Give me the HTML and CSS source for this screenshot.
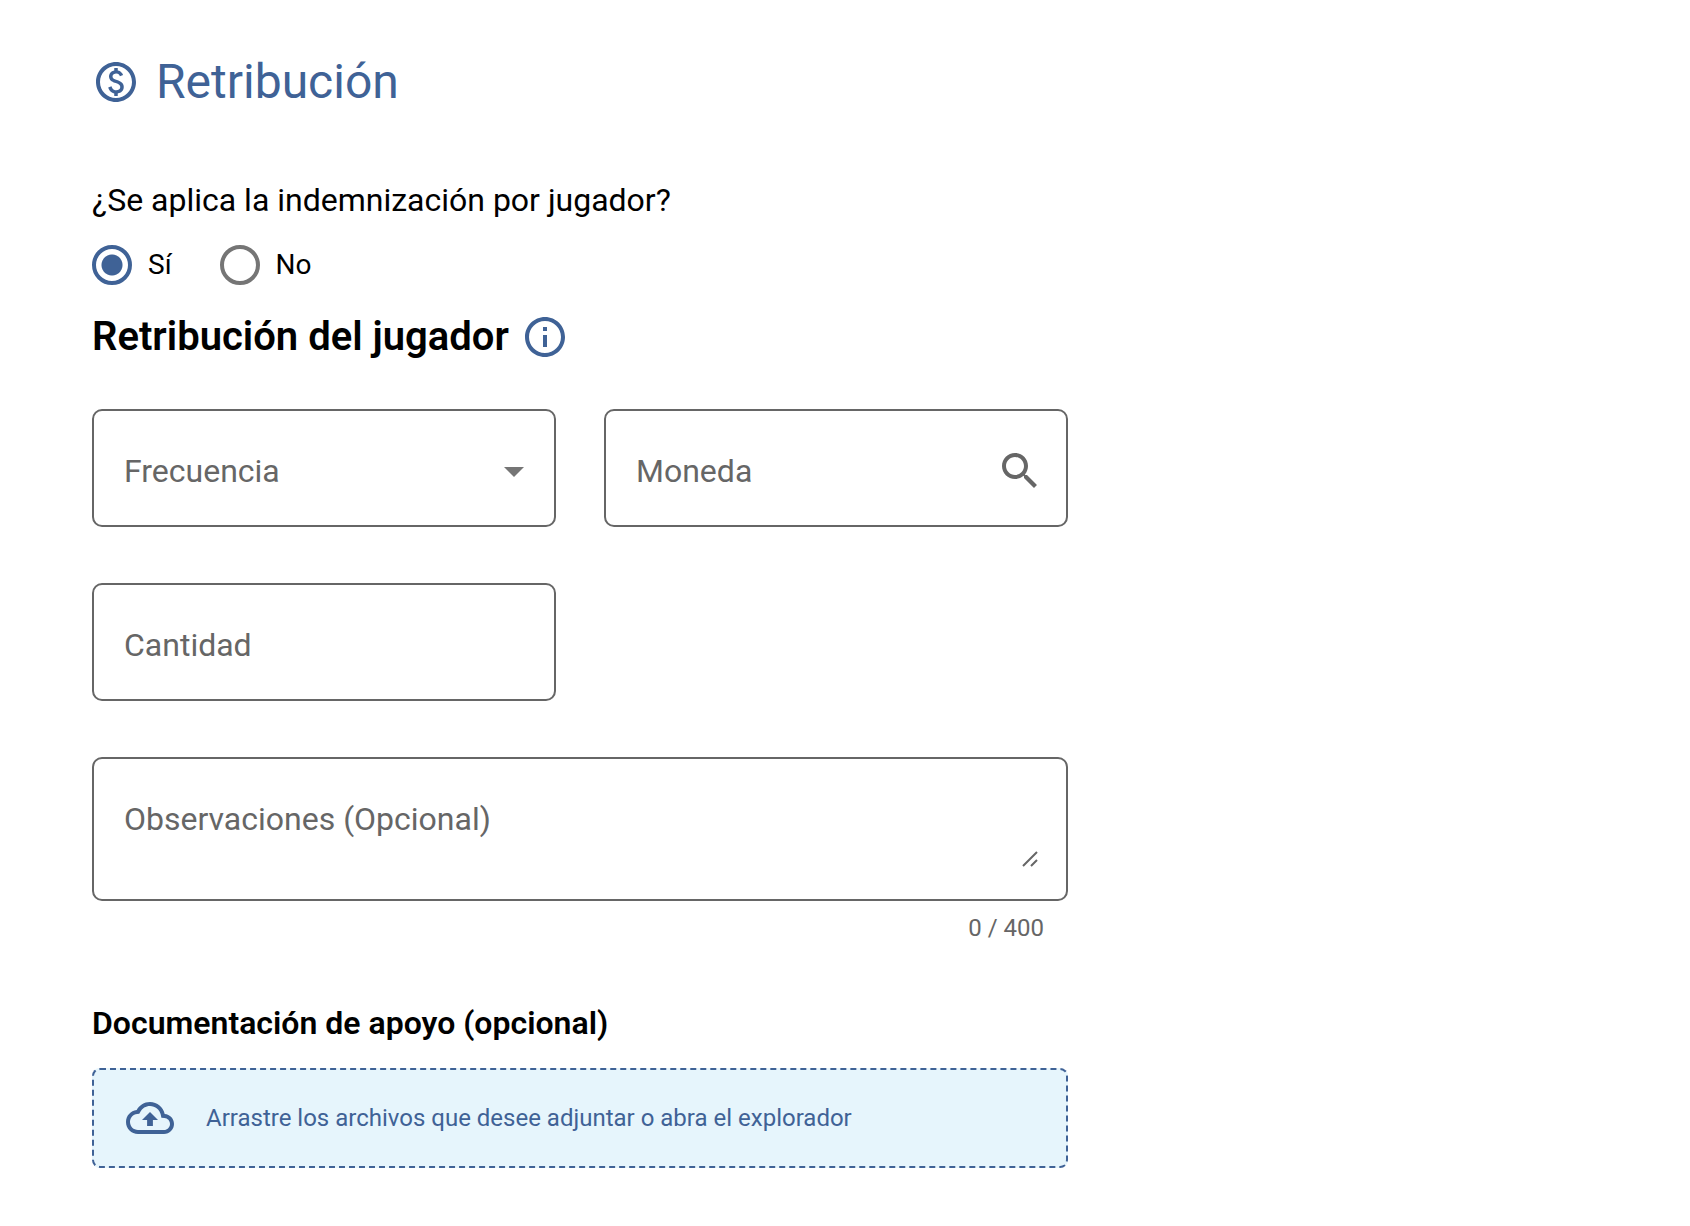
FILE: index.html
```html
<!DOCTYPE html>
<html lang="es">
<head>
    <meta charset="UTF-8">
    <meta name="viewport" content="width=device-width, initial-scale=1.0">
    <title>Retribución</title>
    <link rel="stylesheet" href="styles.css">
</head>
<body>
    <form class="container">
        <h1 class="title">
            <svg class="icon" viewBox="0 0 24 24" aria-hidden="true">
                <path d="M12 2C6.48 2 2 6.48 2 12s4.48 10 10 10 10-4.48 10-10S17.52 2 12 2zm0 18c-4.41 0-8-3.59-8-8s3.59-8 8-8 8 3.59 8 8-3.59 8-8 8zm.89-8.9c-1.78-.59-2.64-.96-2.64-1.9 0-1.02 1.11-1.39 1.81-1.39 1.31 0 1.79.99 1.9 1.34l1.58-.67c-.15-.44-.82-1.91-2.66-2.23V5h-1.75v1.26c-2.6.56-2.62 2.85-2.62 2.96 0 2.27 2.25 2.91 3.35 3.31 1.58.56 2.28 1.07 2.28 2.03 0 1.13-1.05 1.61-1.98 1.61-1.82 0-2.34-1.87-2.4-2.09l-1.66.67c.63 2.19 2.28 2.78 3.02 2.96V19h1.75v-1.24c.52-.09 3.02-.59 3.02-3.22.01-1.39-.6-2.61-3-3.44z"/>
            </svg>
            Retribución
        </h1>

        <fieldset class="question">
            <legend>¿Se aplica la indemnización por jugador?</legend>
            <div class="options">
                <label class="option"><input type="radio" name="apply" value="si" checked>Sí</label>
                <label class="option"><input type="radio" name="apply" value="no">No</label>
            </div>
        </fieldset>

        <div class="subtitle">
            <h2>Retribución del jugador</h2>
            <button type="button" class="info" aria-label="Información">
                <svg class="icon" viewBox="0 0 24 24" aria-hidden="true">
                    <path d="M11 7h2v2h-2zm0 4h2v6h-2zm1-9C6.48 2 2 6.48 2 12s4.48 10 10 10 10-4.48 10-10S17.52 2 12 2zm0 18c-4.41 0-8-3.59-8-8s3.59-8 8-8 8 3.59 8 8-3.59 8-8 8z"/>
                </svg>
            </button>
        </div>

        <div class="fields">
            <div class="field">
                <select id="frequency" required>
                    <option value="" selected></option>
                    <option value="mensual">Mensual</option>
                    <option value="anual">Anual</option>
                </select>
                <label for="frequency">Frecuencia</label>
                <svg class="caret" viewBox="0 0 20 10" aria-hidden="true"><path d="M0 0h20L10 10z"/></svg>
            </div>
            <div class="field">
                <input type="text" id="currency" placeholder=" ">
                <label for="currency">Moneda</label>
                <svg class="icon search" viewBox="0 0 24 24" aria-hidden="true">
                    <path d="M15.5 14h-.79l-.28-.27C15.41 12.59 16 11.11 16 9.5 16 5.91 13.09 3 9.5 3S3 5.91 3 9.5 5.91 16 9.5 16c1.61 0 3.09-.59 4.23-1.57l.27.28v.79l5 4.99L20.49 19l-4.99-5zm-6 0C7.01 14 5 11.99 5 9.5S7.01 5 9.5 5 14 7.01 14 9.5 11.99 14 9.5 14z"/>
                </svg>
            </div>
            <div class="field">
                <input type="text" id="amount" inputmode="decimal" placeholder=" ">
                <label for="amount">Cantidad</label>
            </div>
            <div class="field wide">
                <textarea id="notes" maxlength="400" placeholder=" "></textarea>
                <label for="notes">Observaciones (Opcional)</label>
                <svg class="grip" viewBox="0 0 16 16" aria-hidden="true"><path d="M1 15 15 1M9 15l6-6"/></svg>
            </div>
        </div>
        <div class="counter"><span id="count">0</span> / 400</div>

        <h3>Documentación de apoyo (opcional)</h3>
        <label class="dropzone">
            <input type="file" multiple>
            <svg class="icon" viewBox="0 0 24 24" aria-hidden="true">
                <path d="M19.35 10.04C18.67 6.59 15.64 4 12 4 9.11 4 6.6 5.64 5.35 8.04 2.34 8.36 0 10.91 0 14c0 3.31 2.69 6 6 6h13c2.76 0 5-2.24 5-5 0-2.64-2.05-4.78-4.65-4.96zM19 18H6c-2.21 0-4-1.79-4-4 0-2.05 1.53-3.76 3.56-3.97l1.07-.11.5-.95C8.08 7.14 9.94 6 12 6c2.62 0 4.88 1.86 5.39 4.43l.3 1.5 1.53.11c1.56.1 2.78 1.41 2.78 2.96 0 1.65-1.35 3-3 3zM8 13h2.55v3h2.9v-3H16l-4-4z"/>
            </svg>
            Arrastre los archivos que desee adjuntar o abra el explorador
        </label>
    </form>

    <script>
        const notes = document.getElementById("notes");

        notes.addEventListener("input", function () {
            document.getElementById("count").textContent = notes.value.length;
        });
    </script>
</body>
</html>
```

FILE: styles.css
```css
* {
    box-sizing: border-box;
}
body {
    margin: 0;
    font-family: Roboto, "Liberation Sans", sans-serif;
    font-size: 32px;
    line-height: 40px;
    color: #000;
    background: #fff;
}
.container {
    max-width: 1160px;
    padding: 50px 92px;
}
h1, h2, h3 {
    margin: 0;
    font-weight: 600;
}
.icon {
    width: 48px;
    height: 48px;
    flex: none;
    fill: currentColor;
}
.title {
    display: flex;
    align-items: center;
    gap: 16px;
    margin-bottom: 66px;
    font-size: 48px;
    font-weight: 400;
    line-height: 64px;
    color: #3f6296;
}
.question {
    margin: 0;
    padding: 0;
    border: 0;
}
legend {
    padding: 0;
}
.options {
    display: flex;
    gap: 48px;
    padding-top: 25px;
    font-size: 28px;
}
.option {
    display: flex;
    align-items: center;
    gap: 16px;
}
.option input {
    appearance: none;
    width: 40px;
    height: 40px;
    margin: 0;
    border: 4px solid #757575;
    border-radius: 50%;
}
.option input:checked {
    border-color: #3f6296;
    background: radial-gradient(circle, #3f6296 10px, transparent 11px);
}
.subtitle {
    display: flex;
    align-items: center;
    gap: 12px;
    margin: 28px 0 48px;
}
.subtitle h2 {
    font-size: 40px;
    line-height: 48px;
}
.info {
    display: flex;
    padding: 0;
    border: 0;
    background: none;
    color: #3f6296;
}
.fields {
    display: grid;
    grid-template-columns: 1fr 1fr;
    gap: 56px 48px;
}
/* control, label and icon share one grid cell */
.field {
    display: grid;
    color: #666;
}
.field > * {
    grid-area: 1 / 1;
}
.field input, .field select, .field textarea {
    appearance: none;
    display: block;
    width: 100%;
    height: 118px;
    padding: 42px 30px 32px;
    border: 2px solid #666;
    border-radius: 10px;
    background: none;
    font: inherit;
    color: #000;
    resize: none;
}
.field textarea {
    height: 144px;
}
.field label {
    justify-self: start;
    align-self: start;
    margin: 42px 32px 0;
    pointer-events: none;
}
.field :focus + label, .field :valid:not(:placeholder-shown) + label {
    margin-top: 4px;
    font-size: 24px;
}
.wide {
    grid-column: 1 / -1;
}
.caret, .search, .grip {
    justify-self: end;
    pointer-events: none;
}
.caret {
    width: 20px;
    height: 10px;
    margin: 58px 32px 0;
    fill: #757575;
}
.search {
    margin: 38px 24px 0;
}
.grip {
    align-self: end;
    width: 16px;
    height: 16px;
    margin: 0 30px 34px;
    fill: none;
    stroke: #666;
    stroke-width: 2;
}
.counter {
    margin: 7px 24px 0;
    font-size: 24px;
    text-align: right;
    color: #666;
}
h3 {
    margin: 55px 0 25px;
    font-size: 32px;
}
.dropzone {
    display: flex;
    align-items: center;
    gap: 32px;
    min-height: 100px;
    padding: 24px 32px;
    border: 2px dashed #3f6296;
    border-radius: 8px;
    background: #e6f5fc;
    font-size: 24px;
    color: #3f6296;
    cursor: pointer;
}
.dropzone input {
    position: absolute;
    width: 1px;
    height: 1px;
    opacity: 0;
}
```
